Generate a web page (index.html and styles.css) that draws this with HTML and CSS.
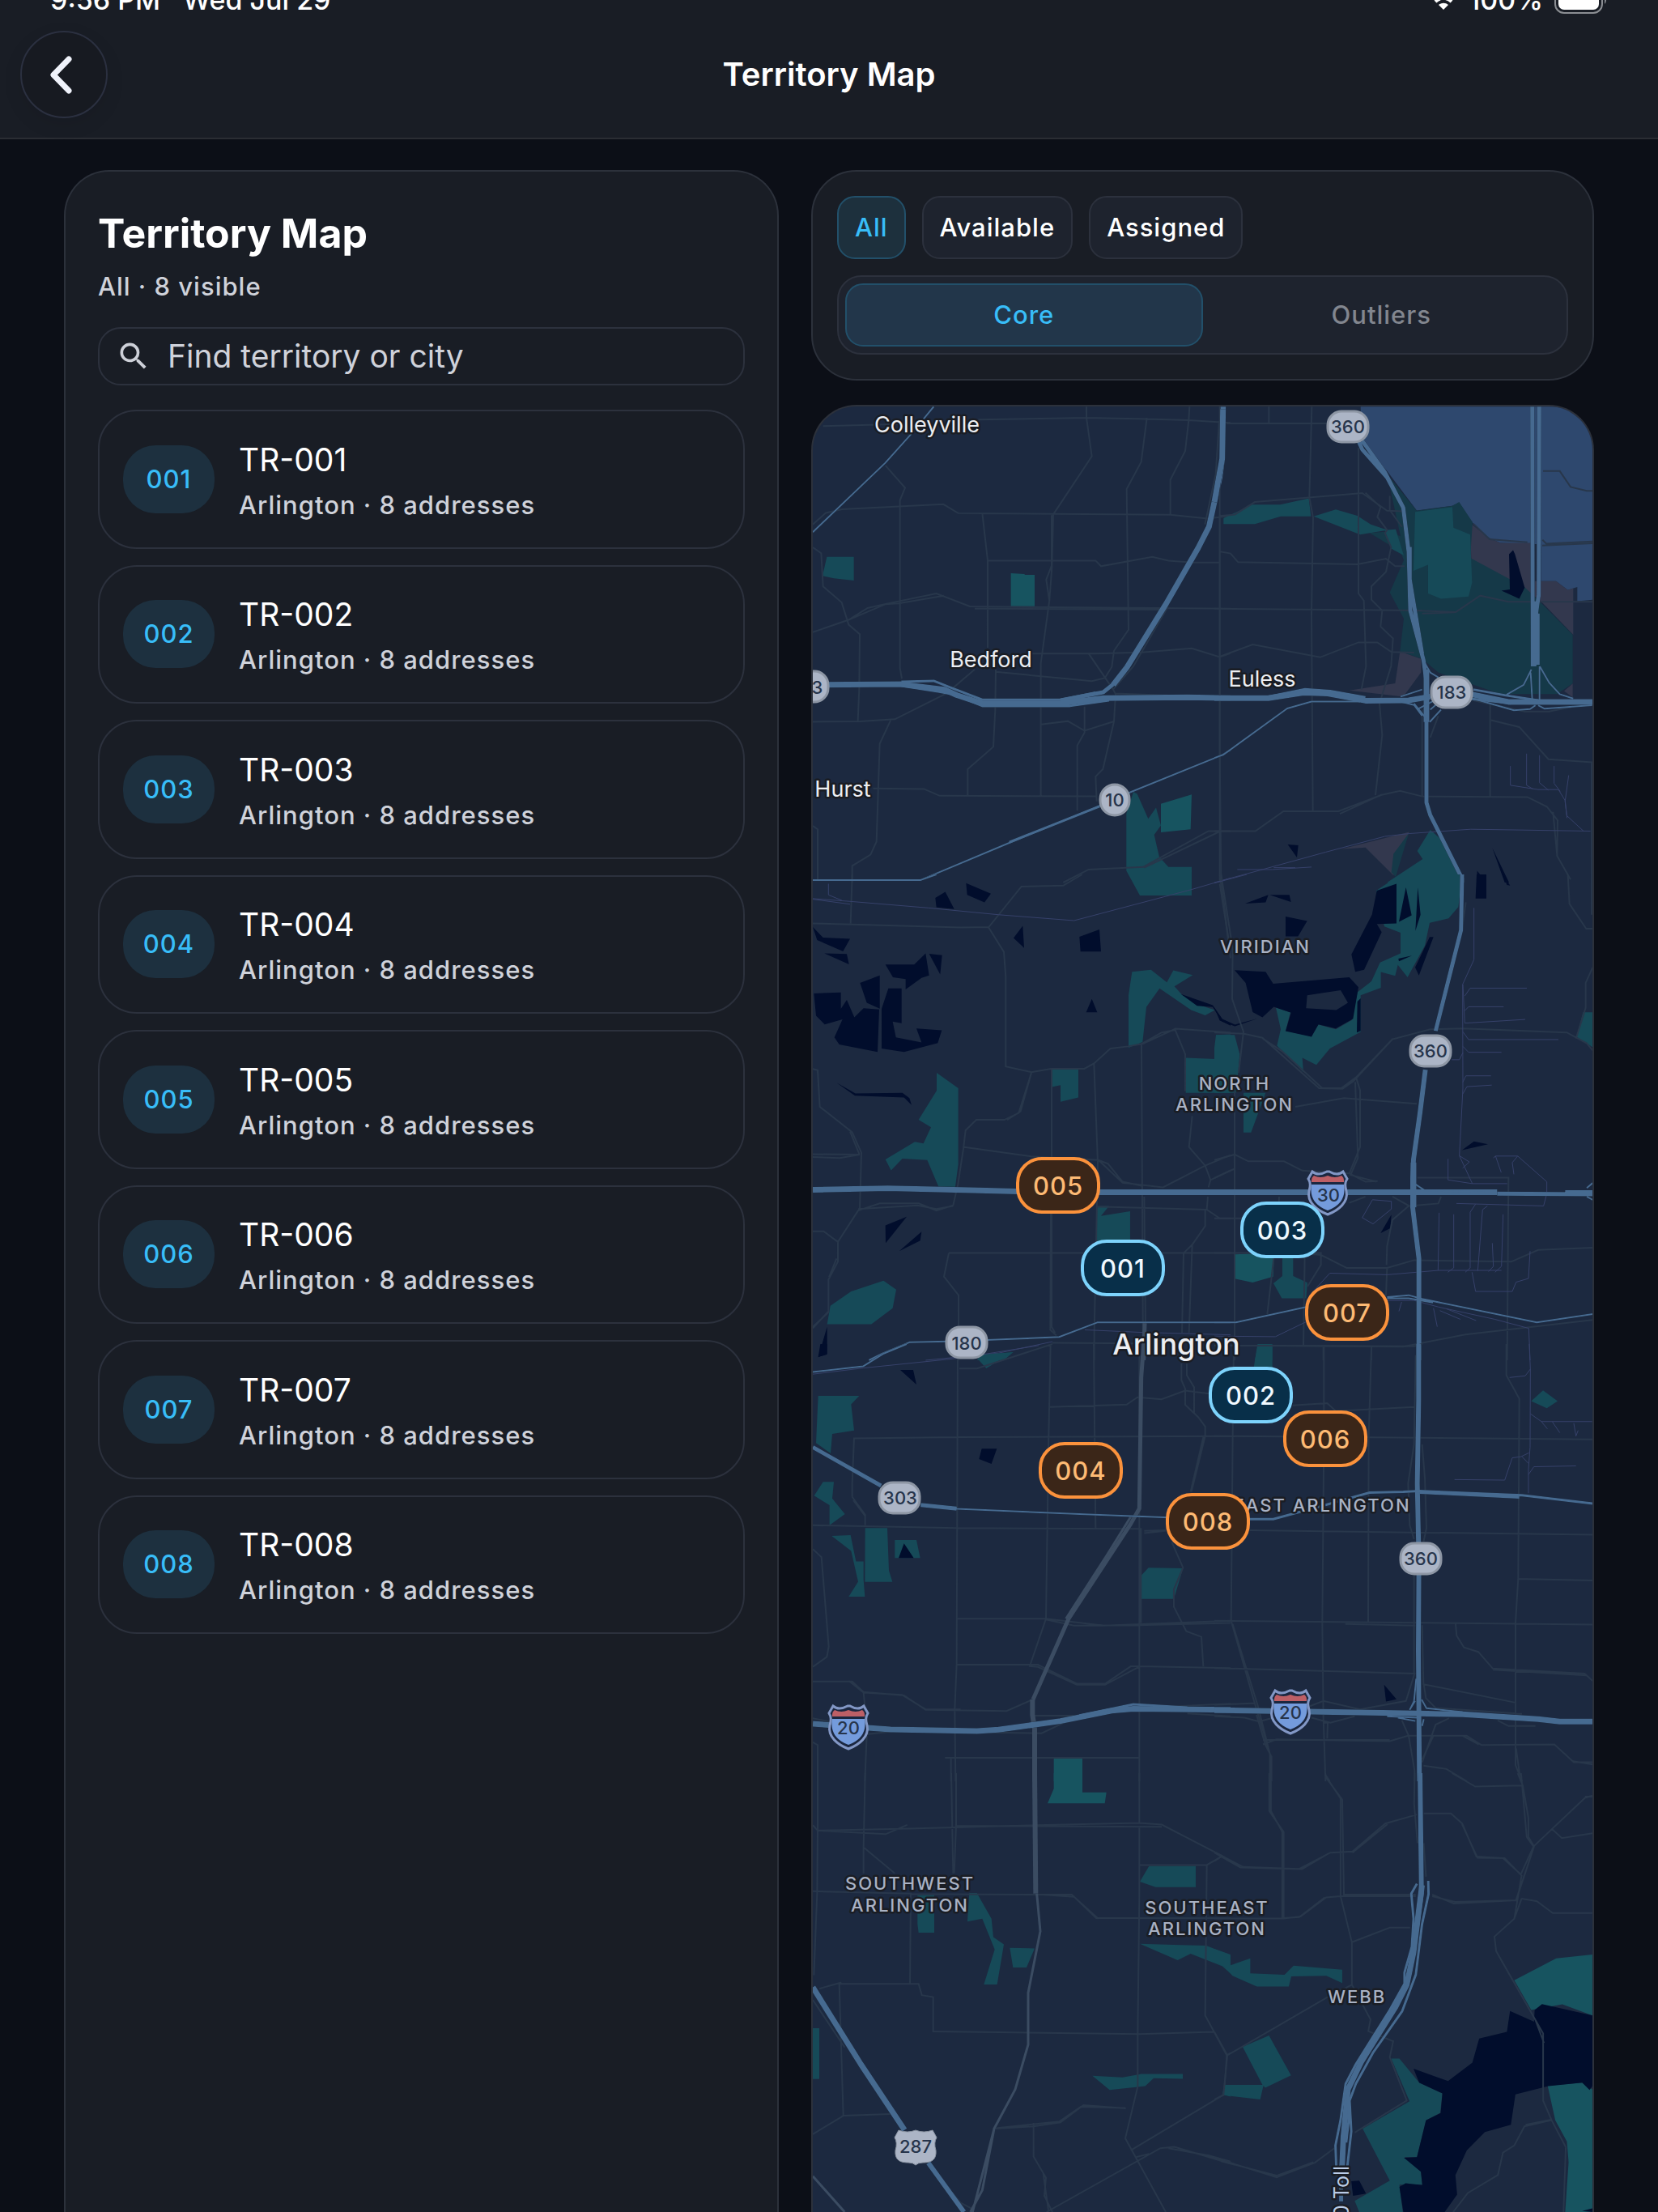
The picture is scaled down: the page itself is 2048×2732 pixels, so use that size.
FILE: index.html
```html
<!DOCTYPE html>
<html lang="en">
<head>
<meta charset="utf-8">
<meta name="viewport" content="width=device-width, initial-scale=1">
<title>Territory Map</title>
<link rel="stylesheet" href="styles.css">
</head>
<body>
<div class="app">
  <header class="topbar">
    <div class="status">
      <div class="status-group"><span>9:56 PM</span><span>Wed Jul 29</span></div>
      <div class="status-group status-right">
        <svg class="wifi" viewBox="0 0 34 26" aria-hidden="true"><path d="M2 9a21 21 0 0 1 30 0M7 15a14 14 0 0 1 20 0" fill="none" stroke="#fff" stroke-width="4"/><path d="M17 25l-6-6a9 9 0 0 1 12 0z" fill="#fff"/></svg>
        <span>100%</span>
        <svg class="battery" viewBox="0 0 66 34" aria-hidden="true"><rect x="1" y="1" width="58" height="32" rx="11" fill="none" stroke="#8b8e93" stroke-width="2"/><rect x="5" y="5" width="50" height="24" rx="7" fill="#fff"/><path d="M62 12q4 5 0 10z" fill="#8b8e93"/></svg>
      </div>
    </div>
    <div class="navbar">
      <button class="back" type="button" aria-label="Back"><svg viewBox="0 0 104 104" aria-hidden="true"><path d="M58 33L39 52.500 58 72" fill="none" stroke="#eff2fa" stroke-width="7" stroke-linecap="round" stroke-linejoin="round"/></svg></button>
      <h1 class="nav-title">Territory Map</h1>
    </div>
  </header>

  <main class="content">
    <section class="card list-card">
      <h2 class="list-title">Territory Map</h2>
      <p class="list-meta">All · 8 visible</p>
      <label class="search">
        <svg viewBox="0 0 24 24" aria-hidden="true"><path fill="#cdd0d8" d="M15.5 14h-.79l-.28-.27A6.47 6.47 0 0 0 16 9.5 6.5 6.5 0 1 0 9.5 16c1.61 0 3.09-.59 4.23-1.57l.27.28v.79l5 4.99L20.49 19l-4.99-5zm-6 0C7.01 14 5 11.99 5 9.5S7.01 5 9.5 5 14 7.01 14 9.5 11.99 14 9.5 14z"/></svg>
        <input type="text" placeholder="Find territory or city" aria-label="Find territory or city">
      </label>
      <ul class="territories">
        <li><button class="territory" type="button"><span class="code">001</span><span class="info"><span class="name">TR-001</span><span class="detail">Arlington · 8 addresses</span></span></button></li>
        <li><button class="territory" type="button"><span class="code">002</span><span class="info"><span class="name">TR-002</span><span class="detail">Arlington · 8 addresses</span></span></button></li>
        <li><button class="territory" type="button"><span class="code">003</span><span class="info"><span class="name">TR-003</span><span class="detail">Arlington · 8 addresses</span></span></button></li>
        <li><button class="territory" type="button"><span class="code">004</span><span class="info"><span class="name">TR-004</span><span class="detail">Arlington · 8 addresses</span></span></button></li>
        <li><button class="territory" type="button"><span class="code">005</span><span class="info"><span class="name">TR-005</span><span class="detail">Arlington · 8 addresses</span></span></button></li>
        <li><button class="territory" type="button"><span class="code">006</span><span class="info"><span class="name">TR-006</span><span class="detail">Arlington · 8 addresses</span></span></button></li>
        <li><button class="territory" type="button"><span class="code">007</span><span class="info"><span class="name">TR-007</span><span class="detail">Arlington · 8 addresses</span></span></button></li>
        <li><button class="territory" type="button"><span class="code">008</span><span class="info"><span class="name">TR-008</span><span class="detail">Arlington · 8 addresses</span></span></button></li>
      </ul>
    </section>

    <div class="map-column">
      <section class="card filters">
        <div class="chips">
          <button class="chip selected" type="button">All</button>
          <button class="chip" type="button">Available</button>
          <button class="chip" type="button">Assigned</button>
        </div>
        <div class="segments">
          <button class="segment selected" type="button">Core</button>
          <button class="segment" type="button">Outliers</button>
        </div>
      </section>

      <section class="card map" aria-label="Map of Arlington">
        <svg class="map-art" viewBox="1004 502 963 2230" preserveAspectRatio="xMinYMin slice" aria-hidden="true">
          <defs>
            <g id="interstate">
              <path d="M-19 -26Q-12 -20 -1 -26Q1 -26 2 -26Q12 -20 19 -26L24 -17Q20 -11 23 -2C26 12 13 22 0 27C-13 22 -26 12 -23 -2Q-20 -11 -24 -17Z" fill="#1b2740" stroke="#8297c5" stroke-width="3"/>
              <path d="M-20 -15Q-20 -19 -17 -21Q-9 -17 0 -21Q9 -17 17 -21Q20 -19 20 -15V-13H-20Z" fill="#bd5f66"/>
              <path d="M-20 -10H20C23 8 13 17 0 22C-13 17 -23 8 -20 -10Z" fill="#749bdc"/>
            </g>
            <rect id="route" x="-25" y="-19" width="50" height="38" rx="17" fill="#acb5c6" stroke="#8d96a4" stroke-width="3"/>
          </defs>

          <!-- north-west: Colleyville, Bedford, Hurst -->
          <g transform="translate(1000 490) scale(.33333 .38265)">
            <path class="park" d="M64 517H164V593L90 586L48 578ZM1174 1570V1345L1200 1275L1214 1282L1255 1362L1284 1326L1302 1384L1277 1414L1296 1486L1330 1518H1416V1610H1224L1174 1530Z"/>
            <path class="park bright" d="M746 570L797 572V575H834V676H746ZM1302 1314L1416 1284L1412 1396L1302 1406Z"/>
            <g class="streets">
              <path d="M50 95L340 88M625 74L1027 68L1250 72L1406 76L1560 84M1026 32V68L1046 192L903 380L898 550L889 656L857 860V1288M1250 68L1229 210L1175 298L1182 752L1128 820L1120 872L1094 908L1046 918L690 888M1408 32L1405 76L1392 175L1337 268V380M12 412L60 375L120 363L496 347L551 376L1336 381L1475 393L1560 384M281 222L354 294L335 334V876L342 910M640 376L660 528V810M660 529H1060L1080 547L1270 517L1330 529L1420 535H1518M897 382V545L877 590L889 660M12 486L43 505L50 612L119 664L145 736L186 766L184 940L179 1046M12 760L145 720L215 682L275 670L470 635L594 677L1560 684M145 720L280 670L330 667L498 642M612 684L1320 687M1324 684L1200 870L1125 945M820 829H1060L1230 825L1416 812L1520 840L1560 828M1035 830L1125 945L1134 960L1128 1048L1087 1202L1060 1226L1064 1306M612 880L510 956L316 1041L186 1048L12 1049M300 1045L260 1120L248 1436L226 1478L158 1514V1568M690 880L688 1010L681 1130L586 1202V1288M235 1264L424 1266L482 1288L1066 1290M857 1058L957 1047L1019 1078L1128 1048M1019 1000V1084L992 1126V1336M12 1385L30 1396V1560M1518 78L1505 250L1465 412M1520 380V1140L1525 1568M1134 958L1400 966M940 1568L1034 1526L1236 1518L1478 1402H1560M1240 1520L1518 1404"/>
            </g>
            <g class="roads"><path class="w3" d="M460 32L375 122L280 214L12 437M12 1560H412L740 1440L1075 1320L1190 1276L1530 1156L1560 1140"/><path class="w4" d="M740 1438L1075 1322"/><path class="w7" d="M1532 32L1528 205L1520 260L1480 420L1440 488L1320 670L1176 873L1125 930"/><path class="w5" d="M1125 928L1088 954L930 980"/><path class="w7" d="M12 930L340 928L500 945L545 963L640 990H930L1090 973L1400 970L1560 973"/><path class="w4" d="M340 920L460 917L520 938L640 978H930L1060 955M340 933L480 952L540 962L640 998H965L1110 980"/></g>
          </g>

          <!-- north-east: Euless and the airport -->
          <g transform="translate(1500 490) scale(.33333 .38265)">
            <path class="basin" d="M542 32H1402V655L1345 660V614L1310 624L1266 595H1210V476L1060 472L1015 455L955 405L907 342L882 352L750 367L640 240L545 150Z"/>
            <path class="field" d="M948 408L1015 455L1060 472H1180V595H1266L1310 624L1330 618V768L1210 660L1150 620L952 525ZM688 822L766 846V890L700 968L500 948L670 925ZM1296 950L1328 926V970Z"/>
            <path class="marsh" d="M640 250L750 368L882 352L907 340L957 405L948 520L1150 615L1210 665L1328 768V925L1270 960H1060L960 930L830 890L770 846L688 822L702 716L650 632L702 528L690 500L575 440L640 435L690 450Z"/>
            <path class="park" d="M34 392L140 348H244L350 328L358 386H246L150 411H34ZM368 386L450 364L530 384L580 412L640 430L672 428L702 512L655 490L632 432L540 445ZM744 372L882 356L886 423L948 445L955 600L942 645L840 652L792 635V542L738 562ZM640 1568L772 1492L752 1466L800 1398L842 1430L920 1560V1568Z"/>
            <path class="field" d="M470 1460L722 1405L664 1545L560 1455Z"/>
            <path class="marsh" d="M720 1410L664 1475L656 1535L672 1550Z"/>
            <path class="water" d="M1092 508L1107 495L1114 508L1150 616L1130 652L1064 626L1095 622ZM272 1445L311 1448L306 1487ZM1030 1456L1092 1568H1076ZM974 1530L1008 1568H972Z"/>
            <g class="streets">
              <path d="M45 86H418M202 32V86M361 32L352 325L366 390L360 700L365 1340M20 385L76 380L150 340L548 311L640 368L700 370M534 165V635L554 658L562 870L545 945M560 310L616 356L604 388L640 430L632 440L655 486L636 565L582 612V655L622 690L616 742L662 780L655 870L612 990L622 1092L597 1286M650 320V366L695 420M22 500L60 506L88 534L530 541L636 523L670 547H705M0 684L770 690M22 838L142 800L392 841L534 793H604L656 824L740 826M740 690L895 695L985 642L1090 662H1402M770 700L890 696M1218 240H1280L1320 291L1380 304H1402M960 410L1020 460L1160 470M1216 462L1230 474L1402 467M1215 480L1402 473M20 30V1568M0 1402H152L256 1338H460L620 1285L688 1272L770 1290L1160 1292L1232 1323L1272 1367L1270 1482L1320 1558M620 1284L465 1346M1022 995V1292M1026 1044L1130 1066L1238 1170L1402 1180M1398 1180V1568M960 980L1150 1016H1240L1330 1000M1255 1340L1270 1480M770 1010V1290M830 1030L800 1100"/>
            </g>
            <path class="rail" d="M0 1568L170 1528L412 1470L632 1419L722 1410L950 1396L1394 1402M85 1526H215L360 1518M220 1520H300M1097 1192V1254L1200 1268H1275L1299 1302L1306 1352L1368 1402M1157 1152V1254L1180 1266M1205 1157V1246L1238 1270M1259 1192V1248L1282 1274M1313 1222L1300 1304L1307 1360"/>
            <g class="roads"><path class="w7" d="M32 40L29 200L16 262L0 340"/><path class="w5" d="M535 145L548 170L640 260L700 358L720 500L726 690L775 850L786 920V1310L800 1350L918 1555V1568M548 142L632 244L700 358M724 485V590L770 830"/><path class="w7" d="M786 880V1050"/><path class="w5" d="M1178 32L1180 870M1204 32L1202 640L1192 700L1186 870M1198 700V865"/><path class="w7" d="M1190 660V830"/><path class="w7" d="M0 973H200L330 955L420 958L560 981L720 980L800 968M950 960L1090 985H1402"/><path class="w4" d="M200 968L336 944L430 950L560 970M960 945L1080 964L1200 980M950 975L1100 990"/><path class="w3" d="M0 1166L34 1155L270 1006L360 984H540M1175 880L1146 930L1082 962M1172 890L1178 978M1205 870V978M1206 870L1240 922L1280 960L1330 974M960 975L1110 1012L1170 1008L1190 996M1200 996L1224 1007L1400 996M780 860L800 890L830 906M690 968L770 945M690 984L740 995L770 1030M800 1010L840 980M798 1050L840 1010M740 990L786 1040M750 1010L860 960"/></g>
          </g>

          <!-- west: river lakes and downtown -->
          <g transform="translate(1000 1080) scale(.33333 .38265)">
            <path class="park" d="M1195 314L1265 308L1324 348L1348 310L1420 325L1352 361L1380 388L1440 420L1502 438L1466 455L1414 438L1297 368L1248 428L1234 541L1182 559V390ZM898 628H996V720L930 734V680L898 686ZM1394 592L1506 596V518L1560 516V705H1394ZM471 640L551 690V935L540 1008H478L436 922L344 917L302 955L281 920L390 863L422 868L450 816L404 792L471 698ZM1066 1070H1110L1080 1102L1188 1087V1185H1062ZM77 1392L154 1346L274 1311L321 1340L308 1400L229 1452H65ZM620 1568L640 1552L755 1542L720 1568Z"/>
            <path class="water" d="M466 76L503 56L536 112L470 106ZM580 28L672 62L648 90L584 66ZM12 170L50 204L150 208L124 248L28 212ZM55 255L138 257L146 290ZM281 291H388L430 255L443 326L415 334L356 371V338L309 332ZM443 256L491 261L484 323ZM187 350L260 326V433L212 414ZM16 384L116 381V434L138 405L166 461L200 432L258 436L252 573L110 549L92 526L122 468L56 484L24 456ZM292 368H341V480L308 475L320 526L415 542L396 497L490 503L475 544L350 573L267 562V434ZM756 205L790 166L795 237ZM1000 201L1074 178L1080 249H1004ZM1046 402L1066 445H1025ZM100 672L170 707L344 705L370 722L378 744L350 720L168 714ZM281 1133L360 1105L282 1190ZM415 1153L410 1182L332 1216ZM65 1460V1548L32 1558ZM1376 386L1494 422L1532 470L1560 480V488L1528 474L1494 428L1436 424Z"/>
            <g class="streets">
              <path d="M12 158L560 171L664 170L785 39L940 36L1010 0M664 172L720 250L727 330V620L822 638L895 627H1018L1054 610L1115 562L1180 555L1236 546L1356 498L1560 510M1228 548L1305 510L1355 502L1392 580V700M822 640L782 765L732 792M822 640L775 770L722 792H618L578 826L570 885L550 1000L532 1068L470 1085L405 1062H260L180 1085L105 1186V1250L70 1308V1410L12 1465M573 880L820 910L1070 922L1160 995L1310 1010L1466 940L1560 906M1070 922L1106 934L1160 992L1230 1005M532 1070L470 1080L400 1068L180 1080M158 0L152 158M12 628L30 632L38 750L158 832L192 898L186 1080M150 830L184 902M12 903L186 904L112 915L12 912M12 1152H52L105 1186M100 1240L72 1300M12 1460L72 1412M1054 610L1068 930L1055 1480V1568M897 630V1460L910 1480M894 1090L892 1470L915 1488M1230 550L1236 1568M1240 1040L1245 1470M1062 1072L1472 1082L1520 1110H1560M1472 1082L1476 1040M1466 1084V1135L1418 1195L1386 1222L1380 1480M1418 1195L1406 1480M516 1222H1560M516 1222L498 1298L552 1358V1568M1418 780L1406 880L1466 940L1486 986L1560 955M1486 986L1478 1010M1520 0L1560 270M1524 0L1550 200M900 1512L1200 1514"/>
            </g>
            <path class="rail" d="M12 78L150 87L440 108L700 130L980 149L1410 50L1560 12M12 80L150 96M70 30V66L120 84M1020 1470L1230 1478L1560 1486M430 1568L700 1545L900 1508"/>
            <g class="roads"><path class="w3" d="M12 18H412L470 0M220 1568L270 1546L370 1510L510 1507M655 1503L925 1493L1066 1446L1560 1446"/><path class="w7" d="M12 1018L290 1013L600 1019L770 1023L1080 1026H1560"/></g>
            <path class="arterial w5" d="M1242 1448L1238 1568"/>
          </g>

          <!-- east: Viridian and the entertainment district -->
          <g transform="translate(1500 1080) scale(.33333 .38265)">
            <path class="park" d="M600 52L690 0H920L904 105L868 142L798 156L780 230L716 332L680 292L670 327L617 315V366L542 390V508L428 562L378 615L326 592L330 638L232 553L246 500L228 430L282 445L264 505L360 522L384 484L450 500L510 470L530 380L582 345L614 284L690 255V188L630 168ZM6 518H75L94 580L88 640L80 705H0V560ZM108 705H190L136 833H108ZM1366 445H1402V558L1342 524ZM252 1238H292V1296L345 1318L340 1368H250L219 1320L252 1296ZM162 1518H215V1568H150Z"/>
            <path class="park bright" d="M75 1226L222 1222L218 1298L142 1317L75 1305Z"/>
            <path class="water" d="M602 52L675 30V158L602 160L620 186L555 308L522 314L508 258L584 130ZM710 42L731 132L684 153ZM754 42L764 130L745 182ZM798 202H812L758 326L744 300ZM114 94L200 66L190 90ZM205 66H278L284 89ZM264 136L344 150L310 200L264 200ZM75 309L190 314L218 353L500 332L534 364L514 466L450 497L386 484L360 524L264 506L284 446L220 427L178 461L142 444L116 350ZM972 0H1008V78H968ZM1070 0L1096 36L1084 34ZM918 890L962 862L1014 871ZM616 1158L656 1098L652 1142ZM530 410L542 400V505L528 510ZM682 272L732 262L684 280ZM0 430L28 466L76 485L160 465L76 490L20 472Z"/>
            <path class="island" d="M344 390L468 374L495 414L452 438L340 432Z"/>
            <g class="streets">
              <path d="M25 0L68 240L66 402L108 508L90 640M20 30L60 250M0 510L110 514L178 527L388 690L475 692L515 668L660 532L800 500L920 497L1306 510L1380 545L1402 568M180 530L250 570L400 690H470L525 655L662 530M525 655L540 696V880L500 965L560 992L605 990M522 670L532 915L505 970L600 992M300 750L480 722L750 740M0 922L75 904L126 926H258L326 956L500 965M75 700V1568M0 980L75 950M752 979H1090L1085 1568M0 1222H395V1260L345 1330M310 1222L395 1228L490 1270H640L740 1245L1100 1250L1200 1212L1402 1205M640 1268L636 1360M240 1040L238 1100M720 1070L660 1115L640 1200L638 1260M500 1060L560 1040M660 1040L722 1070L830 1062L840 1040M1310 0L1316 95L1378 175H1402M1398 0V130M1402 300L1376 350V430L1340 530M0 1110H240M335 1230L330 1520M220 1240L196 1420M0 1520L700 1524L930 1485L1402 1438M404 1524V1568M582 1524V1568M932 90L915 190"/>
            </g>
            <path class="rail" d="M0 28L120 0M962 108V275L920 355L921 690L908 908L956 998H1085M921 355L928 480L1152 468M928 392L948 367H1158M928 440L942 427H1072M921 508L942 533H1275M921 555L942 574H1064M921 575L908 598H880M921 670L932 650H1025M921 708L936 685L1028 680M866 918V986L956 998M908 908L945 928L920 948M1034 915L1042 909H1124L1232 992V1030L1220 1070L897 1062M1042 909L1063 962M1124 909L1104 930L1110 968M833 1092L829 1278H1064M887 1097V1270L865 1284M968 1064L948 1090V1270L930 1284M1012 1070L994 1082L976 1280M1030 1190L1034 1265L1016 1282M1070 1097L1064 1265L1040 1284M586 1050L656 1055V1080L588 1128L548 1108ZM370 1342L428 1287L640 1292L830 1278M955 1284L968 1346H1104L1118 1316L1164 1304L1170 1216M640 1375L740 1375L830 1396L1040 1436L1165 1465L1170 1568M812 1400L826 1460M836 1408L912 1436M860 1402L970 1440M0 1490L226 1492L340 1444M684 1410L694 1380"/>
            <g class="roads"><path class="w5" d="M918 0L914 180L820 505"/><path class="w6" d="M782 630L762 770L738 920L735 980V1075L758 1240V1568"/><path class="w7" d="M738 930V1075M0 1026H1048"/><path class="w5" d="M1048 1030L1402 1032M1300 1026H1402"/><path class="w3" d="M1380 1012L1402 996M1380 1040L1402 1050M745 1000L780 1020L1000 1026M0 1446H80L340 1396M640 1364L720 1358L770 1370L1195 1446L1402 1419M640 1368H720L810 1382"/></g>
          </g>

          <!-- south-west of downtown -->
          <g transform="translate(1000 1660) scale(.33333 .34439)">
            <path class="park" d="M32 186H184L154 216L165 310L84 322L78 392L24 355ZM622 52L650 36L752 30L655 87ZM50 494H90L84 554L131 610L74 650V578L17 544ZM82 688L152 685L172 780H200V845L205 906H145L180 852L154 742ZM206 660H288L294 812L307 853H205ZM316 703H396L410 767H316ZM1256 802L1384 804L1350 914H1229V830Z"/>
            <path class="park bright" d="M905 1487H1011V1568H905Z"/>
            <path class="water" d="M336 93H384L396 145ZM638 375H694L674 430L628 412ZM350 715L386 767H330ZM40 0H65L64 38L32 46Z"/>
            <g class="streets">
              <path d="M893 0L886 330L876 985L816 1155L846 1158L990 1222H1095L1224 1156H1190L1095 1218H990L846 1150H548M549 0L545 1150L538 1310L541 1568M1053 0L1060 660M1222 0V1568M555 88H620L900 0M890 226L1175 217L1215 191L1304 198L1392 167L1480 178M1378 70V130L1392 160V218L1440 262L1466 296V330L1415 530M1398 70V112L1425 155V250M1460 330L1412 530M158 548V500L165 338L548 334L1560 330M158 548L206 612V650M162 560L205 615M12 650L545 660L1228 663V1000M12 735L44 764L71 1085L64 1122L12 1158M548 985H876L1090 1010L1560 992M876 988L980 1010L1220 1008L1560 1000M1222 1156L1560 1162M1342 710L1384 802L1350 880V942L1396 1030L1452 1050L1459 1156M12 1210H158L200 1248L350 1260L430 1312L730 1316L826 1275M145 1208L200 1250L205 1300M200 1250L342 1258L430 1310H560M12 1342L80 1355M212 1400L205 1568M205 1400L320 1388L860 1396L960 1350M12 1428L30 1438V1568M502 1484H1222M524 1484V1568M820 1333H980M1240 670L1320 668M1240 678L1320 670M1330 1300L1560 1290M1400 1325L1560 1335"/>
            </g>
            <path class="rail" d="M12 108L200 86L560 50L850 5"/>
            <g class="arterials"><path class="w5" d="M1238 0L1229 120L1222 590L1190 645L960 985L828 1275"/><path class="w4" d="M1190 620L1100 760L950 985"/><path class="w6" d="M826 1275V1330L834 1380V1568"/></g>
            <g class="roads"><path class="w3" d="M12 100L198 80L275 34L360 0M412 577L545 591L1000 610L1330 622"/><path class="w5" d="M12 370L265 508M412 577L545 590"/><path class="w7" d="M12 1362L300 1382L620 1388L700 1383L930 1352L1120 1315L1200 1308L1560 1312"/><path class="w4" d="M1000 1332L1200 1292L1400 1304"/></g>
          </g>

          <!-- East Arlington and the I-20 interchange -->
          <g transform="translate(1500 1660) scale(.33333 .34439)">
            <path class="park" d="M160 0H215V90H145ZM1218 166L1272 205L1232 230L1174 205Z"/>
            <path class="water" d="M629 1222L675 1274L636 1282Z"/>
            <g class="streets">
              <path d="M0 5L740 8L770 0M72 0L68 330L62 992L150 1290L206 1470V1568M68 1005L162 1300L206 1470M406 10V330L400 1000L404 1340L412 1568M582 10L572 330L570 1000M290 220L418 212L450 240L740 226M0 330L1402 342M130 668L1402 684M1082 0V112L1130 196L1126 840L1116 1000V1430M1126 842L1402 848M0 992L1402 1006M485 1004L745 1010M0 1162L742 1182L710 1280L540 1310L404 1280L350 1300M0 1294L150 1288M746 40L740 360L718 500L724 650L740 700M770 360L780 480L786 660L775 710M740 830V1180M770 1008L775 1220L1116 1286M776 1220L784 1270L820 1305L1140 1326M894 1004L898 1046L925 1088L978 1104L1032 1164L1372 1182L1402 1208M1032 1168L1378 1188M0 1335L112 1340L165 1354L220 1340M360 1340L430 1358L520 1335M404 1358L420 1358L418 1415M180 1436L230 1418L650 1424L720 1404L935 1405L990 1438L1260 1436L1332 1500H1402M650 1420H180M920 1405L980 1436M1330 1496L1402 1508M1116 1430V1510L1140 1568M1118 1450L1135 1568M770 1500L820 1365L870 1342M695 1350L720 1405L742 1530V1568M775 1512L860 1524L936 1568M1050 1350L1090 1370H1190M156 1330L190 1440L212 1480V1568M414 1548L428 1568M770 1490L812 1405"/>
            </g>
            <path class="rail" d="M1167 0L1171 90L1170 370L1164 450V535M1171 90L1152 114L1094 120M1171 250L1212 278H1400M1212 278L1234 304M1252 278L1280 318M1332 284L1340 330L1348 310M1166 390L1136 404L1104 408L1076 488L890 486M1140 404L1164 428M1164 468L1184 440L1340 437"/>
            <g class="roads"><path class="w6" d="M757 0V200L752 500L758 780L756 1100L760 1568"/><path class="w4" d="M130 628H218L420 575L575 533L700 530L760 527L1140 542L1402 572M760 533L1130 550"/><path class="w7" d="M0 1313L350 1318L760 1325L920 1328L1200 1345L1280 1354H1402"/><path class="w3" d="M748 1200L740 1280L724 1312M768 1275L786 1306L920 1320M680 1340L745 1352M776 1345L770 1370M744 1280L726 1308M640 1335L750 1340"/></g>
          </g>

          <!-- Southwest Arlington -->
          <g transform="translate(1000 2190) scale(.33333 .34567)">
            <path class="park" d="M1258 332H1431V407H1282L1224 388ZM592 428H620L674 520L681 586L720 612L695 755H646L686 630L640 520L585 530ZM400 436H462V570H404L400 540ZM742 624L834 626L804 694H754ZM1224 610L1376 614L1470 616L1560 650V716L1530 690L1412 645L1364 668ZM12 911H36V1093H12ZM1048 1081L1160 1087L1230 1075H1383V1092L1275 1090L1244 1118L1112 1132ZM1536 1115H1560V1156L1530 1148Z"/>
            <path class="park bright" d="M905 0H1011V69H1100L1094 108H882L905 56Z"/>
            <g class="streets">
              <path d="M30 0V205L28 430L16 722M12 186L30 205L282 218L362 185M30 205L370 198L840 186L1222 178L1305 184L1528 295L1560 315M545 188L1305 192M206 0L200 265V358M200 265L316 358M525 0L532 358M543 0V188L536 358M1222 0V178M1222 195V440L1216 930V1120L1170 1305L1320 1568M12 422L375 430L372 752M375 432L840 434L972 434L1062 518H1560M860 434L980 442L1070 520M110 753H404L416 793L458 800V923L1222 932L1500 924M36 770L118 748M110 753L125 1224L12 1290M125 1224L298 1218M1224 328H1472L1528 297M1472 328L1466 866L1546 1008L1536 1148L1190 1348M1546 1008L1560 1000M690 1270L830 1262L930 1248L1015 1186L1172 1198M695 1268L925 1245L1005 1192L1170 1196M830 1250V1370L876 1446L870 1510L900 1568M866 1430L876 1500L885 1560M878 1568L1300 1340L1352 1335L1560 1395M1210 1372L1258 1360M1330 1340L1480 1366L1560 1388M12 810L130 980M440 1400L560 1535L600 1555"/>
            </g>
            <g class="arterials"><path class="w6" d="M834 0L838 430"/><path class="w4" d="M842 430L855 565L810 785V970L762 1130L684 1270L604 1568M684 1270L640 1490L596 1568M12 1440L130 1568"/></g>
            <g class="roads"><path class="w7" d="M12 765L190 1040L352 1275"/><path class="w6" d="M440 1392L572 1568"/></g>
          </g>

          <!-- Webb and the lake -->
          <g transform="translate(1500 2190) scale(.34949 .34567)">
            <path class="park" d="M0 628L57 648L52 688L127 662V715L248 720L280 688L452 702V750L396 724L272 726L263 762H150L64 724L34 690L0 676ZM100 978L193 937L271 1080L180 1124L170 1114ZM38 1114H174L162 1166L30 1150ZM625 1020H654L724 1106L806 1144L798 1214L748 1240L716 1372H672L730 1424L735 1470H654L666 1568H512L496 1528L620 1456L524 1270L690 1172Z"/>
            <path class="park bright" d="M1060 740L1208 662L1336 648V866L1230 826L1120 846ZM1178 1117L1300 1106L1336 1130V1568H1240L1252 1390L1246 1316L1205 1240Z"/>
            <path class="water" d="M1045 850L1130 888L1132 846L1158 825L1336 866V1118L1326 1132L1300 1106L1180 1118L1064 1148L1048 1256L956 1282L892 1348L852 1436L858 1506L814 1568H668L654 1478L676 1465L735 1472L730 1424L670 1374L716 1372L748 1240L800 1214L806 1144L724 1106L704 1056L826 1100L912 1034L936 948L1034 924ZM484 1458L512 1456L536 1502L490 1510ZM1300 1564L1336 1555V1568Z"/>
            <g class="streets">
              <path d="M194 0V135L245 210V518M200 0V135L240 210V518M392 0L396 18L452 94L458 434H712M392 8L446 90V440L486 604V756L552 880L544 922L632 958L620 1015L680 1170L496 1284M0 282L102 335L300 342L410 284L488 280L604 180L716 148M0 284L92 337L310 343L405 286M488 284L612 182M0 314L25 298M0 519H245L305 512L395 444L446 440L712 440M245 518L300 514L390 444M740 144H836L876 180L926 298L1020 304L1084 362M875 182L930 302L1026 304L1086 366L1060 520L990 584L996 636L1162 930V1170L1192 1240L1242 1336L1234 1568M840 0L922 48L1088 44M1072 0L1090 44L1110 160V228L1130 262L1066 456M1084 0L1104 228L1128 262L1084 360M1130 260L1310 88L1336 80M1194 200L1228 232L1336 215M1310 84H1336M770 434L846 466L1066 454L1130 262M1085 448L1140 458L1196 500H1336M770 440L850 460L1066 454M1086 448L1060 520M486 604L620 552H692M486 756L400 800L46 1008L0 924M46 1008L32 1150L0 1166M708 0L706 110L718 250M1192 1240L1096 1262L1060 1330L1020 1356L1002 1436L896 1500L844 1568M1190 1238L1100 1256M0 1374L220 1444L355 1392L424 1340M22 1386L220 1438L350 1390M1134 880L1165 964M740 250L748 370"/>
            </g>
            <g class="roads"><path class="w6" d="M727 0L732 430L700 660"/><path class="w7" d="M734 400L704 640L680 756L640 836L520 1030L472 1130L456 1300L450 1440"/><path class="w4" d="M716 395L696 430L704 520L698 620L672 712V752L620 846L500 1040L464 1110L446 1240L428 1330L432 1440M756 385L757 432L734 540L712 720L664 850L560 1000L500 1110L478 1170L484 1280L466 1440M470 1130L476 1230L466 1320"/><path class="w5" d="M448 1400V1530"/></g>
          </g>

          <g class="shields">
            <use href="#route" x="1665" y="527"/><text x="1665" y="535">360</text>
            <use href="#route" x="1793" y="855"/><text x="1793" y="863">183</text>
            <use href="#route" x="998" y="848"/><text x="998" y="857">183</text>
            <rect x="1359" y="969" width="36" height="38" rx="18" fill="#acb5c6" stroke="#8d96a4" stroke-width="3"/><text x="1377" y="996">10</text>
            <use href="#route" x="1767" y="1298"/><text x="1767" y="1306">360</text>
            <use href="#route" x="1194" y="1658"/><text x="1194" y="1667">180</text>
            <use href="#route" x="1111" y="1850"/><text x="1112" y="1858">303</text>
            <use href="#route" x="1755" y="1925"/><text x="1755" y="1933">360</text>
            <use href="#interstate" x="1640" y="1473"/><text x="1641" y="1484">30</text>
            <use href="#interstate" x="1048" y="2133"/><text x="1048" y="2142">20</text>
            <use href="#interstate" x="1594" y="2114"/><text x="1594" y="2123">20</text>
            <path d="M1110 2631Q1121 2635 1131 2631Q1141 2635 1152 2631L1157 2640Q1153 2646 1156 2656C1157 2668 1150 2671 1140 2671Q1134 2671 1131 2674Q1128 2671 1122 2671C1112 2671 1105 2668 1106 2656Q1109 2646 1105 2640Z" fill="#acb5c6" stroke="#8d96a4" stroke-width="1"/><text x="1131" y="2659">287</text>
          </g>
          <g class="places">
            <text x="1145" y="534">Colleyville</text>
            <text x="1224" y="824">Bedford</text>
            <text x="1559" y="848">Euless</text>
            <text x="1041" y="984">Hurst</text>
            <text class="city" x="1453" y="1673">Arlington</text>
          </g>
          <g class="districts">
            <text x="1563" y="1177">VIRIDIAN</text>
            <text x="1525" y="1346">NORTH</text><text x="1525" y="1372">ARLINGTON</text>
            <text x="1633" y="1867">EAST ARLINGTON</text>
            <text x="1124" y="2334">SOUTHWEST</text><text x="1124" y="2361">ARLINGTON</text>
            <text x="1491" y="2364">SOUTHEAST</text><text x="1491" y="2390">ARLINGTON</text>
            <text x="1676" y="2474">WEBB</text>
          </g>
          <text class="road-name" transform="translate(1666 2675) rotate(-90)">360 Toll</text>
        </svg>
        <button class="pin assigned" type="button" style="left:303px;top:962px">005</button>
        <button class="pin available" type="button" style="left:383px;top:1064px">001</button>
        <button class="pin available" type="button" style="left:580px;top:1017px">003</button>
        <button class="pin assigned" type="button" style="left:660px;top:1119px">007</button>
        <button class="pin available" type="button" style="left:541px;top:1221px">002</button>
        <button class="pin assigned" type="button" style="left:633px;top:1275px">006</button>
        <button class="pin assigned" type="button" style="left:331px;top:1314px">004</button>
        <button class="pin assigned" type="button" style="left:488px;top:1377px">008</button>
      </section>
    </div>
  </main>
</div>
</body>
</html>
```

FILE: styles.css
```css
* { box-sizing: border-box; }

body {
  margin: 0;
  background: #0c0f17;
  color: #fff;
  font-family: Inter, "Liberation Sans", sans-serif;
}

h1, h2, p, ul { margin: 0; padding: 0; }
ul { list-style: none; }
button, input { font: inherit; color: inherit; margin: 0; }
button { cursor: pointer; }

.app {
  display: flex;
  flex-direction: column;
  height: 100vh;
  overflow: hidden;
}

/* Top bar */
.topbar {
  flex: none;
  background: #191d25;
  border-bottom: 2px solid #2a2d33;
  padding-bottom: 24px;
}
.status {
  display: flex;
  justify-content: space-between;
  align-items: center;
  height: 40px;
  margin-top: -20px;
  padding: 0 62px;
  font-size: 34px;
  line-height: 40px;
  font-weight: 500;
}
.status-group { display: flex; align-items: center; gap: 28px; }
.status-right { gap: 14px; }
.wifi { width: 34px; height: 26px; }
.battery { width: 66px; height: 34px; }
.navbar {
  display: grid;
  grid-template-columns: 108px 1fr 108px;
  align-items: center;
  padding: 18px 25px 0;
}
.back {
  width: 108px;
  height: 108px;
  padding: 0;
  border: 2px solid #2b3040;
  border-radius: 50%;
  background: #171a21;
  box-shadow: 0 8px 24px rgba(0, 0, 0, .08);
}
.back svg { display: block; width: 100%; height: 100%; }
.nav-title {
  text-align: center;
  font-size: 40px;
  line-height: 48px;
  font-weight: 600;
}

/* Columns */
.content {
  flex: 1;
  min-height: 0;
  display: grid;
  grid-template-columns: 883fr 967fr;
  gap: 40px;
  padding: 38px 79px 0;
}
.card {
  background: #191d25;
  border: 2px solid #2c313b;
  border-radius: 56px;
}
.list-card {
  border-bottom: 0;
  border-radius: 56px 56px 0 0;
  padding: 44px 40px 0;
}
.list-title {
  font-size: 50px;
  line-height: 64px;
  font-weight: 700;
}
.list-meta {
  margin-top: 14px;
  font-size: 31px;
  line-height: 40px;
  font-weight: 500;
  letter-spacing: 1px;
  color: #cfd2da;
}
.search {
  display: flex;
  align-items: center;
  gap: 20px;
  height: 72px;
  margin-top: 30px;
  padding: 0 20px;
  border: 2px solid #2c313d;
  border-radius: 28px;
}
.search svg { flex: none; width: 44px; height: 44px; }
.search input {
  flex: 1;
  min-width: 0;
  padding: 0;
  border: 0;
  outline: 0;
  background: none;
  font-size: 39px;
  line-height: 48px;
}
.search input::placeholder { color: #cfd2da; opacity: 1; }

.territories {
  display: grid;
  grid-auto-rows: 1fr;
  gap: 20px;
  min-height: 1512px;
  margin-top: 30px;
}
.territory {
  display: flex;
  align-items: center;
  gap: 30px;
  width: 100%;
  height: 100%;
  padding: 0 29px;
  border: 2px solid #2c313d;
  border-radius: 48px;
  background: none;
  text-align: left;
}
.code {
  display: grid;
  place-items: center;
  width: 113px;
  height: 84px;
  border-radius: 40px;
  background: #1d303f;
  color: #38bdf8;
  font-size: 31px;
  line-height: 40px;
  font-weight: 500;
  letter-spacing: 1px;
}
.info { display: flex; flex-direction: column; gap: 8px; }
.name { font-size: 39px; line-height: 56px; }
.detail {
  font-size: 31px;
  line-height: 40px;
  font-weight: 500;
  letter-spacing: 1px;
  color: #cfd2da;
}

/* Filters */
.map-column {
  display: flex;
  flex-direction: column;
  gap: 30px;
  min-width: 0;
  min-height: 0;
}
.filters {
  flex: none;
  display: flex;
  flex-direction: column;
  gap: 20px;
  padding: 30px;
}
.chips { display: flex; gap: 20px; }
.chip, .segment {
  height: 78px;
  padding: 0 20px;
  border: 2px solid #2c313d;
  border-radius: 22px;
  background: #1e232e;
  font-size: 31px;
  line-height: 40px;
  font-weight: 500;
  letter-spacing: 1px;
}
.chip.selected {
  border-color: #22506a;
  background: #1d303d;
  color: #38bdf8;
}
.segments {
  display: flex;
  padding: 8px;
  border: 2px solid #2c313d;
  border-radius: 30px;
  background: #1e232e;
}
.segment {
  flex: 1;
  border-color: transparent;
  background: none;
  color: #82868f;
}
.segment.selected {
  border-color: #22506a;
  background: #22364a;
  color: #38bdf8;
}

/* Map */
.map {
  position: relative;
  flex: 1;
  min-height: 0;
  overflow: hidden;
  border-bottom: 0;
  border-radius: 56px 56px 0 0;
  background: #1c2940;
}
.map-art { display: block; width: 100%; height: 100%; }
.map-art path { vector-effect: non-scaling-stroke; }
.park { fill: #164a58; }
.park.bright { fill: #175460; }
.marsh { fill: #153948; }
.field { fill: #33384e; }
.basin { fill: #2e486e; }
.water { fill: #010d2c; }
.island { fill: #1c2940; }
.streets path { fill: none; stroke: #28374b; stroke-width: 2px; }
.rail { fill: none; stroke: #36416a; stroke-width: 1px; }
.roads { filter: drop-shadow(0 0 2px #101722); }
.roads path { fill: none; stroke: #466a90; stroke-linejoin: round; }
.arterial, .arterials path { fill: none; stroke: #3b4c62; stroke-linejoin: round; }
.map-art .w3 { stroke-width: 2px; }
.map-art .w4 { stroke-width: 3px; }
.map-art .w5 { stroke-width: 5px; }
.map-art .w6 { stroke-width: 6px; }
.map-art .w7 { stroke-width: 7px; }
.map-art text {
  text-anchor: middle;
  paint-order: stroke;
  stroke-linejoin: round;
}
.shields text { fill: #26344b; font-size: 22px; font-weight: 500; }
.places text {
  fill: #eceef2;
  stroke: #1a1d24;
  stroke-width: 5px;
  font-size: 27px;
  font-weight: 400;
}
.places .city { font-size: 36px; font-weight: 500; }
.districts text {
  fill: #a9b2c4;
  stroke: #1a1d24;
  stroke-width: 5px;
  font-size: 22px;
  font-weight: 500;
  letter-spacing: 2px;
}
.map-art .road-name {
  fill: #b9cbe6;
  stroke: #1a1d24;
  stroke-width: 5px;
  font-size: 25px;
  text-anchor: end;
}
.pin {
  position: absolute;
  width: 104px;
  height: 70px;
  padding: 0;
  border: 4px solid;
  border-radius: 32px;
  transform: translate(-50%, -50%);
  font-size: 31px;
  font-weight: 500;
  letter-spacing: 1px;
}
.pin.available { border-color: #7dd3fc; background: #082f49; color: #f0f9ff; }
.pin.assigned { border-color: #fb923c; background: #3b2618; color: #fdba74; }
```
